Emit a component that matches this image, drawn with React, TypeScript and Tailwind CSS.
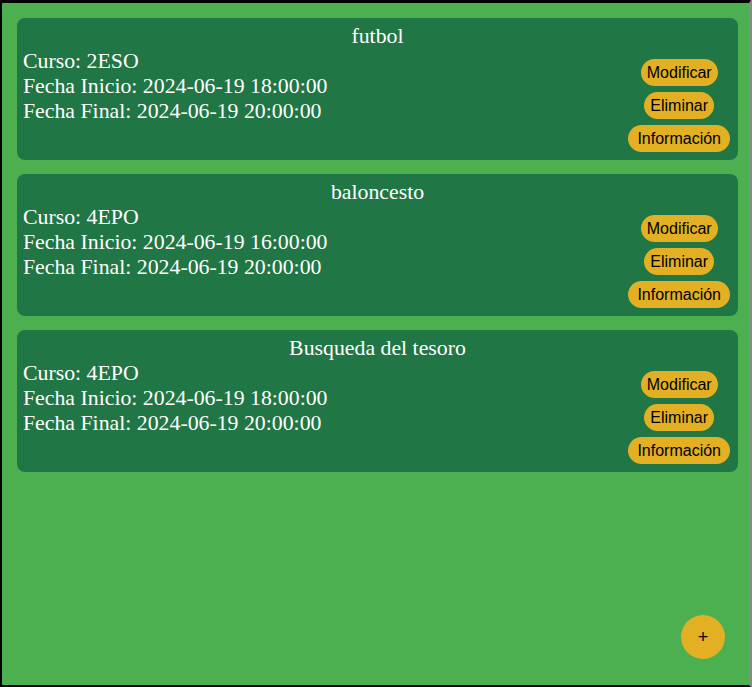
import React from 'react'

const actividades = [
  { nombre: 'futbol', curso: '2ESO', inicio: '2024-06-19 18:00:00', fin: '2024-06-19 20:00:00' },
  { nombre: 'baloncesto', curso: '4EPO', inicio: '2024-06-19 16:00:00', fin: '2024-06-19 20:00:00' },
  { nombre: 'Busqueda del tesoro', curso: '4EPO', inicio: '2024-06-19 18:00:00', fin: '2024-06-19 20:00:00' },
]

const Boton: React.FC<{ texto: string; ancho?: boolean }> = ({ texto, ancho }) => (
  <button
    className={
      (ancho ? 'px-[9px] ' : 'px-[6px] ') +
      "h-[27px] rounded-full bg-[#e2b022] text-black text-[16px] leading-[27px] font-['Liberation_Sans',Arial,sans-serif]"
    }
  >
    {texto}
  </button>
)

export default function App() {
  return (
    <div className="w-full bg-[#4caf50]">
      <div className="relative w-[751px] h-[687px] bg-[#4caf50] border-2 border-t-[3px] border-black border-r-[#8a8a8a] pt-[15px] pl-[15px] pr-[11px] font-['Liberation_Serif','Times_New_Roman',serif]">
        <div className="flex flex-col gap-[14px]">
          {actividades.map((a, i) => (
            <div key={i} className="bg-[#217645] rounded-lg text-white text-[21.8px] leading-[25px] pt-[6px] pb-[8px] px-[6px]">
              <div className="text-center">{a.nombre}</div>
              <div className="flex justify-between">
                <div>
                  <div>Curso: {a.curso}</div>
                  <div>Fecha Inicio: {a.inicio}</div>
                  <div>Fecha Final: {a.fin}</div>
                </div>
                <div className="flex flex-col items-center gap-[6px] pt-[10px] mr-[2px]">
                  <Boton texto="Modificar" />
                  <Boton texto="Eliminar" />
                  <Boton texto="Información" ancho />
                </div>
              </div>
            </div>
          ))}
        </div>
        <button className="absolute right-[24px] bottom-[26px] w-[44px] h-[44px] rounded-full bg-[#e2b022] text-black text-[18px] leading-none flex items-center justify-center font-['Liberation_Sans',Arial,sans-serif]">
          +
        </button>
      </div>
    </div>
  )
}
